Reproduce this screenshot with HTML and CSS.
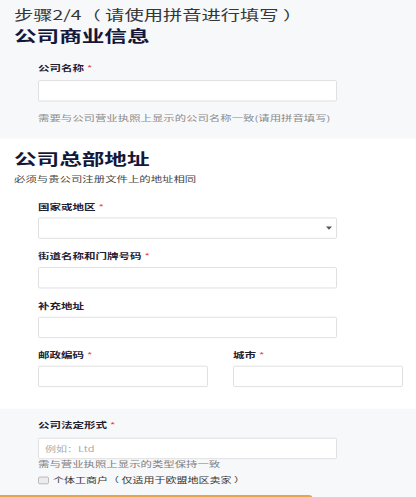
FILE: index.html
```html
<!DOCTYPE html>
<html lang="zh-CN">
<head>
<meta charset="utf-8">
<title>公司商业信息</title>
<link rel="stylesheet" href="styles.css">
</head>
<body>
<div class="page">
  <section class="sec sec-gray sec-1">
    <div class="step">步骤2/4（ 请使用拼音进行填写 ）</div>
    <h1 class="title">公司商业信息</h1>
    <div class="fields">
      <div class="label first">公司名称<span class="req">*</span></div>
      <div class="input gap-s"></div>
      <div class="help help-1">需要与公司营业执照上显示的公司名称一致(请用拼音填写)</div>
    </div>
  </section>

  <section class="sec sec-white sec-2">
    <h2 class="title">公司总部地址</h2>
    <div class="subtitle">必须与贵公司注册文件上的地址相同</div>
    <div class="fields">
      <div class="label first">国家或地区<span class="req">*</span></div>
      <div class="input select gap-xs"><span class="caret"></span></div>
      <div class="label next">街道名称和门牌号码<span class="req">*</span></div>
      <div class="input gap-m"></div>
      <div class="label next">补充地址</div>
      <div class="input gap-m"></div>
      <div class="row">
        <div class="col">
          <div class="label">邮政编码<span class="req">*</span></div>
          <div class="input half gap-m"></div>
        </div>
        <div class="col">
          <div class="label">城市<span class="req">*</span></div>
          <div class="input half gap-m"></div>
        </div>
      </div>
    </div>
  </section>

  <section class="sec sec-gray sec-3">
    <div class="fields">
      <div class="label">公司法定形式<span class="req">*</span></div>
      <div class="input gap-l"><span class="placeholder">例如：Ltd</span></div>
      <div class="help help-3">需与营业执照上显示的类型保持一致</div>
      <label class="check-row"><span class="checkbox"></span><span class="check-text">个体工商户（ 仅适用于欧盟地区卖家 ）</span></label>
    </div>
    <div class="button-top"></div>
  </section>
</div>
</body>
</html>
```

FILE: styles.css
```css
html, body {
  margin: 0;
  padding: 0;
  overflow: hidden;
  background: #ffffff;
}

.page {
  width: 416px;
  margin-bottom: -234px;
  transform: scaleY(0.68);
  transform-origin: 0 0;
  font-family: "Noto Sans CJK SC", "Noto Sans", sans-serif;
}

.sec {
  padding-left: 14px;
  padding-right: 13px;
}

.sec-gray {
  background: #f7f8fa;
}

.sec-white {
  background: #ffffff;
}

.sec-1 {
  padding-top: 10px;
  padding-bottom: 23px;
}

.sec-2 {
  padding-top: 15px;
  padding-bottom: 32px;
}

.sec-3 {
  padding-top: 16px;
}

.step {
  font-size: 19.3px;
  line-height: 24px;
  color: #363636;
  white-space: nowrap;
}

.title {
  margin: 0;
  font-size: 22.6px;
  line-height: 28px;
  font-weight: 700;
  color: #14173a;
}

.sec-1 .title {
  margin-top: 5px;
}

.subtitle {
  margin-top: 8px;
  font-size: 11.4px;
  line-height: 16px;
  color: #454545;
}

.fields {
  padding-left: 24px;
}

.label {
  font-size: 11.5px;
  line-height: 16px;
  font-weight: 700;
  color: #1f2030;
}

.label.first {
  margin-top: 25px;
}

.label.next {
  margin-top: 17px;
}

.req {
  color: #e0403a;
  font-weight: 400;
  margin-left: 3px;
}

.input {
  box-sizing: border-box;
  width: 299px;
  height: 31px;
  border: 1px solid #dadada;
  border-radius: 2px;
  background: #ffffff;
  display: flex;
  align-items: center;
  padding: 0 6px;
}

.gap-s {
  margin-top: 10px;
}

.gap-xs {
  margin-top: 8px;
}

.gap-m {
  margin-top: 9px;
}

.gap-l {
  margin-top: 11px;
}

.select {
  justify-content: flex-end;
  padding-right: 4px;
}

.caret {
  width: 0;
  height: 0;
  border-left: 3px solid transparent;
  border-right: 3px solid transparent;
  border-top: 5px solid #555555;
}

.row {
  display: grid;
  grid-template-columns: 170px 170px;
  column-gap: 25px;
  margin-top: 16px;
}

.input.half {
  width: 170px;
}

.help {
  font-size: 11.4px;
  color: #8a8a8a;
}

.help-1 {
  margin-top: 16px;
  line-height: 16px;
}

.help-3 {
  line-height: 14px;
  color: #7d7d7d;
}

.placeholder {
  font-size: 11px;
  color: #ababab;
}

.check-row {
  display: flex;
  align-items: center;
  margin-top: 9px;
  height: 16px;
}

.checkbox {
  box-sizing: border-box;
  width: 11px;
  height: 11px;
  border: 1px solid #b0b0b0;
  border-radius: 2px;
  background: #ececec;
  margin-right: 4px;
}

.check-text {
  font-size: 11px;
  line-height: 16px;
  color: #363636;
  white-space: nowrap;
}

.button-top {
  margin-top: 14px;
  margin-left: -14px;
  width: 312px;
  height: 3px;
  background: #e6a450;
  border-radius: 0 3px 0 0;
}
```
